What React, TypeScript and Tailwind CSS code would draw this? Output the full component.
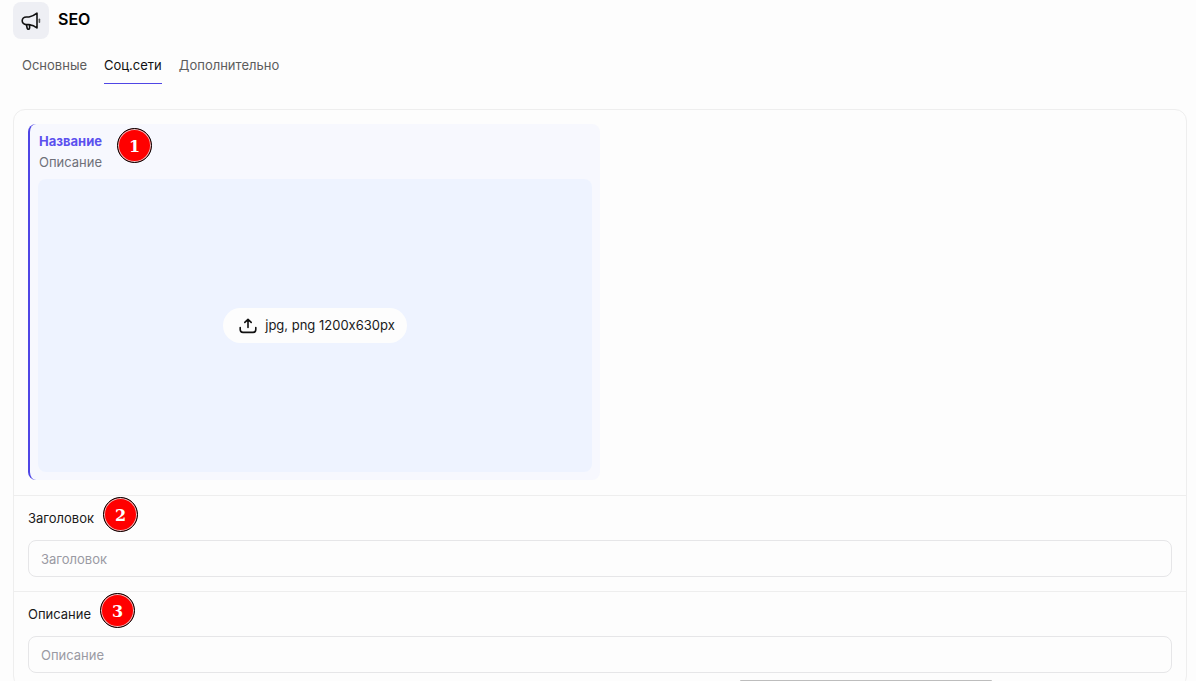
import { useState } from 'react';

const tabs = ['Основные', 'Соц.сети', 'Дополнительно'];

function MegaphoneIcon() {
  return (
    <svg width="20" height="20" viewBox="0 0 20 20" fill="none" stroke="#111" strokeWidth="1.6" strokeLinejoin="round" strokeLinecap="round" aria-hidden="true">
      <path d="M16 2.2V17C13.6 14.8 11 13.9 8 13.6H5.4C2.8 13.6 1.2 11.8 1.2 9.8S2.8 6 5.4 6H8C11 5.4 13.6 4.2 16 2.2Z" />
      <path d="M5.4 13.8 6.2 17.2C6.6 18.8 8.6 18.6 8.6 17V13.8" />
      <path d="M18.4 8.2V11.2" stroke="#555" />
    </svg>
  );
}

function UploadIcon() {
  return (
    <svg width="18" height="16" viewBox="0 0 18 16" fill="none" stroke="#111" strokeWidth="1.6" strokeLinejoin="round" strokeLinecap="round" aria-hidden="true">
      <path d="M9 9.4V1.6M5.8 4.4 9 1.4 12.2 4.4" />
      <path d="M1.2 9.6V11.6C1.2 13.6 2.2 14.4 4 14.4H14C15.8 14.4 16.8 13.6 16.8 11.6V9.6" />
    </svg>
  );
}

function Marker({ value, place }: { value: number; place: string }) {
  return (
    <span className={`absolute flex size-[35px] items-center justify-center rounded-full border border-black bg-[#f00] pt-0.5 font-['DejaVu_Serif',serif] text-base font-bold text-white inset-ring inset-ring-[#e8c4c4] ${place}`}>
      {value}
    </span>
  );
}

function Field({ id, label, marker }: { id: string; label: string; marker: number }) {
  return (
    <div className="flex flex-col items-start gap-3.5 border-t border-[#eeeeee] p-3.5">
      <div className="relative flex">
        <label htmlFor={id} className="leading-4 text-[#1a1a1a]">{label}</label>
        <Marker value={marker} place="-top-[13px] left-full ml-[9px]" />
      </div>
      <input
        id={id}
        type="text"
        placeholder={label}
        className="h-[37px] w-full rounded-lg border border-[#e6e6e8] bg-transparent px-3 text-[#1a1a1a] outline-none placeholder:text-[#9a9aa3]"
      />
    </div>
  );
}

export default function App() {
  const [active, setActive] = useState('Соц.сети');
  return (
    <main className="relative h-screen overflow-hidden bg-[#fdfdfd] pt-0.5 pr-[9px] pl-[13px] font-['Inter',sans-serif] text-[13px] [font-feature-settings:'calt'_0]">
      <header className="flex items-center gap-[9px]">
        <div className="flex h-[37px] w-9 items-center justify-center rounded-lg bg-[#eeeff4]">
          <MegaphoneIcon />
        </div>
        <h1 className="pb-1 text-base leading-5 font-semibold text-black">SEO</h1>
      </header>

      <nav className="mt-[17px] flex gap-[17px] pl-[9px]">
        {tabs.map((tab) => (
          <button
            key={tab}
            type="button"
            onClick={() => setActive(tab)}
            className={`border-b pb-[9px] leading-[18px] ${tab === active ? 'border-[#4f46e5] text-[#111]' : 'border-transparent text-[#5c5c5c]'}`}
          >
            {tab}
          </button>
        ))}
      </nav>

      <section className="mt-[25px] rounded-xl border border-[#eeeeee]">
        <div className="grid grid-cols-2 px-3.5 pt-3.5 pb-[15px]">
          <div className="relative rounded-lg border-l-2 border-[#4f46e5] bg-[#f7f8fe] p-2">
            <p className="px-px leading-[18px] font-bold text-[#5b50ee]">Название</p>
            <p className="mt-[3px] px-px leading-[18px] text-[#6f7079]">Описание</p>
            <Marker value={1} place="top-1 left-[87px]" />
            <div className="mt-2 flex h-[293px] items-center justify-center rounded-lg bg-[#eef3ff]">
              <button type="button" className="flex h-[35px] items-center gap-2 rounded-full bg-[#fdfdfd] pr-3 pl-4 text-[#1a1a1a]">
                <UploadIcon />
                jpg, png 1200x630px
              </button>
            </div>
          </div>
        </div>
        <Field id="social-title" label="Заголовок" marker={2} />
        <Field id="social-description" label="Описание" marker={3} />
      </section>

      <div className="absolute right-[204px] bottom-0 h-px w-[252px] rounded-t-full bg-[#bdbdbd]" />
    </main>
  );
}
